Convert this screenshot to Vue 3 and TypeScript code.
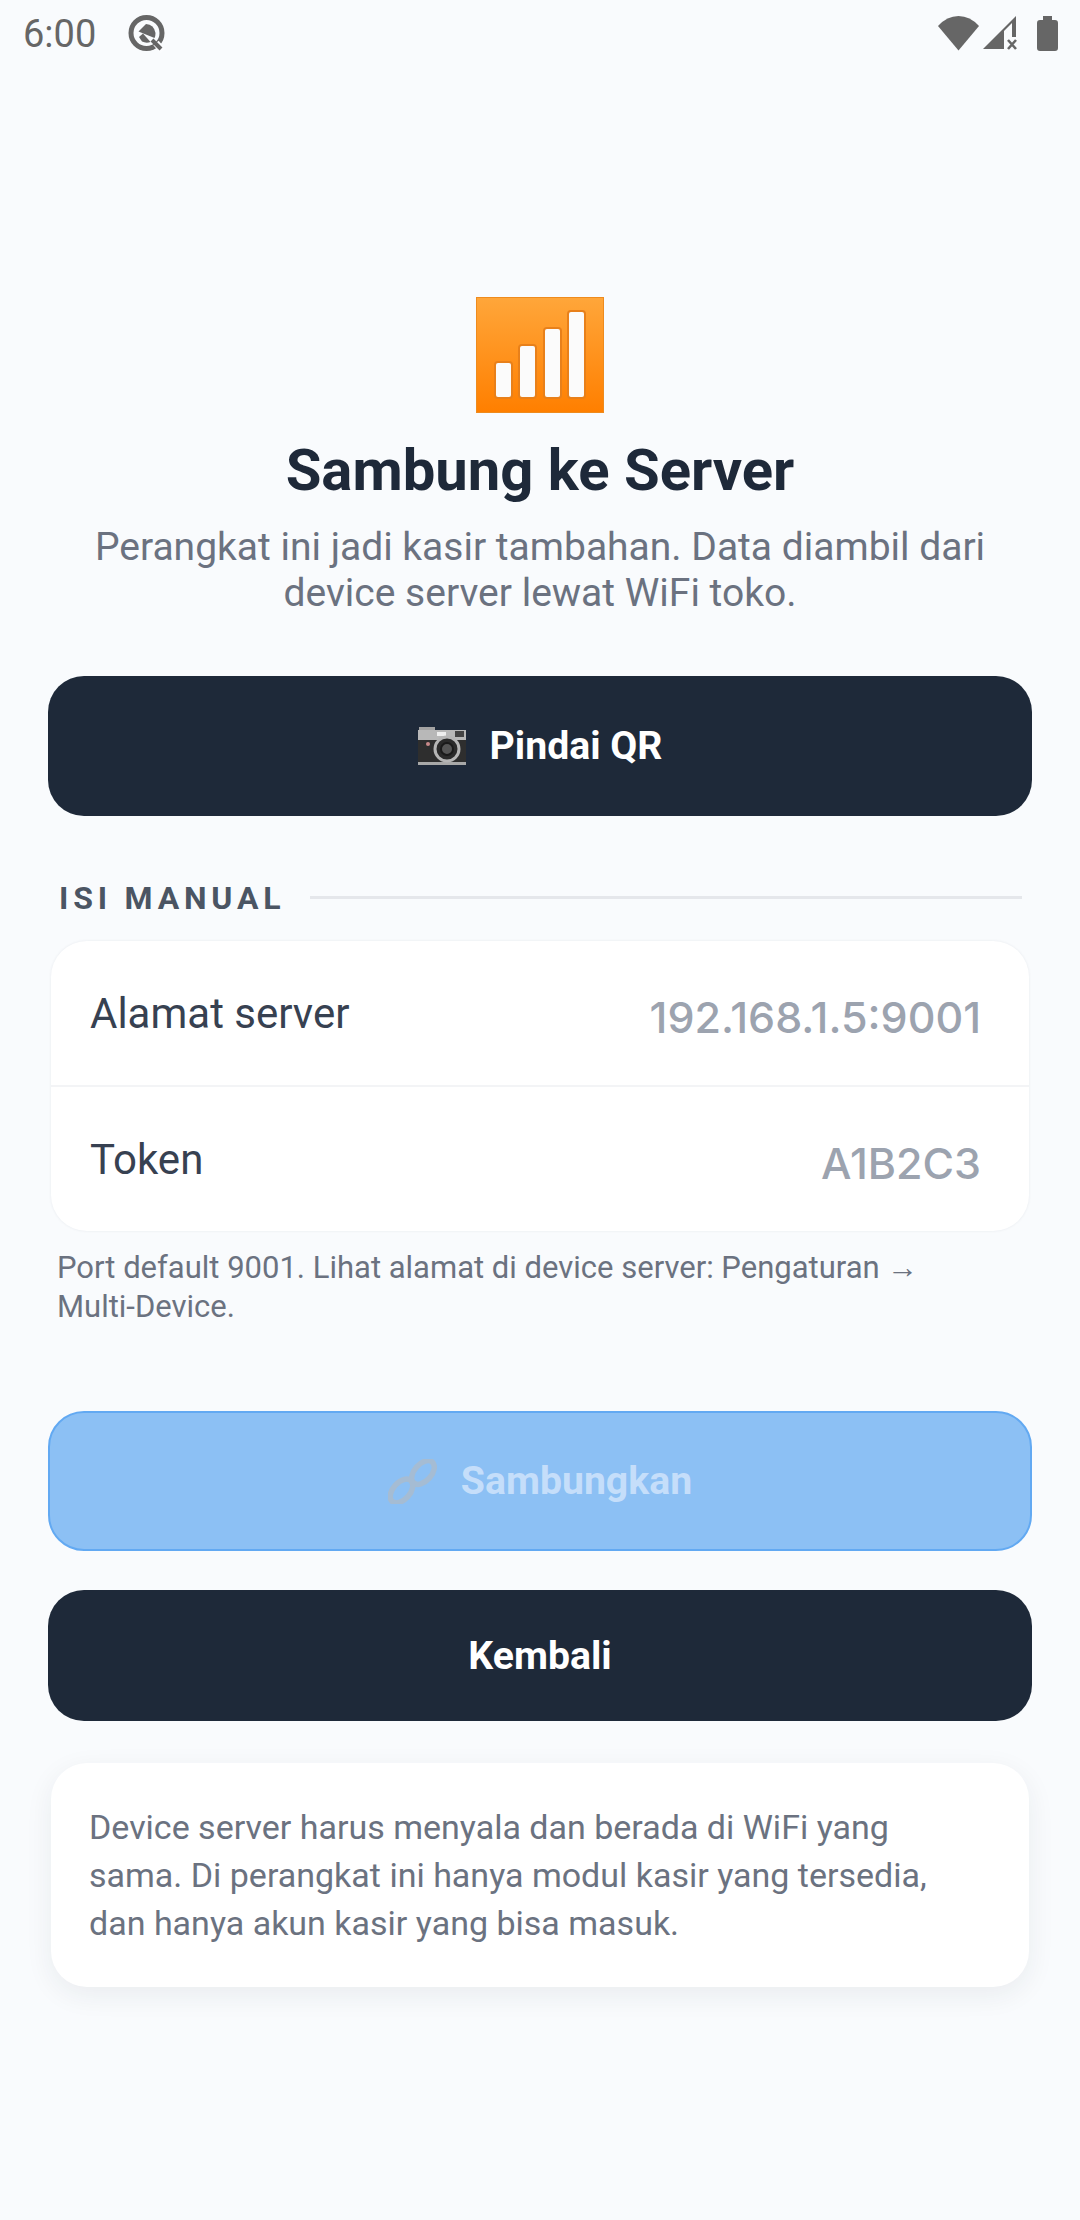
<script setup lang="ts">
const barHeights = [34, 51, 68, 85]
const rows = [
  { label: 'Alamat server', value: '192.168.1.5:9001' },
  { label: 'Token', value: 'A1B2C3' },
]
</script>

<template>
  <div class="screen">
    <header class="status-bar">
      <div class="status-left">
        <span class="clock">6:00</span>
        <svg class="q-icon" width="40" height="40" viewBox="0 0 40 40" fill="none">
          <circle cx="19.5" cy="20" r="15.5" stroke="#666" stroke-width="5" />
          <path d="M11.5 18.5 L19 11 Q27 11.500 28.5 20 Q28.5 23 27.5 25 Z" fill="#666" />
          <path d="M12 24 L16 20.500 L23.500 29 Q19 30.500 15 28.5 Z" fill="#666" />
          <path d="M29 30 L36 38" stroke="#fbfcfe" stroke-width="7" />
          <path d="M25 27 L34 36" stroke="#666" stroke-width="4" />
        </svg>
      </div>
      <div class="status-right">
        <svg width="41" height="35" viewBox="0 0 41 35"><path d="M0 10 Q9 0 20.500 0 Q32 0 41 10 L20.500 34.500 Z" fill="#666" /></svg>
        <svg width="34" height="34" viewBox="0 0 34 34">
          <path d="M0 33 L33 0 V21 H29 V7 L21 15 V33 Z" fill="#666" />
          <path d="M25 24 L33 33 M33 24 L25 33" stroke="#666" stroke-width="2.600" />
        </svg>
        <svg class="battery" width="21" height="35" viewBox="0 0 21 35"><path d="M6 0 H15 V4 H18 Q21 4 21 7 V32 Q21 35 18 35 H3 Q0 35 0 32 V7 Q0 4 3 4 H6 Z" fill="#666" /></svg>
      </div>
    </header>

    <main class="content">
      <div class="logo">
        <div v-for="h in barHeights" :key="h" class="logo-bar" :style="{ height: h + 'px' }" />
      </div>
      <h1 class="title">Sambung ke Server</h1>
      <p class="subtitle">Perangkat ini jadi kasir tambahan. Data diambil dari device server lewat WiFi toko.</p>

      <button class="btn btn-dark btn-qr">
        <svg width="48" height="38" viewBox="0 0 48 38">
          <rect x="1" y="0" width="16" height="6" fill="#a3a3a3" />
          <rect x="0" y="3" width="48" height="11" fill="#b8b8b8" />
          <rect x="0" y="13" width="48" height="22" fill="#2e2e2e" />
          <rect x="0" y="35" width="48" height="3" fill="#a8a8a8" />
          <rect x="19" y="5" width="9" height="4" fill="#eee" />
          <rect x="37" y="4" width="9" height="6" fill="#444" />
          <circle cx="10" cy="17" r="2" fill="#c98a8a" />
          <circle cx="29" cy="22" r="12" fill="#2a2a2a" stroke="#b5b5b5" stroke-width="3" />
          <circle cx="29" cy="22" r="6" fill="#555" stroke="#1a1a1a" stroke-width="2" />
        </svg>
        <span>Pindai QR</span>
      </button>

      <div class="section-head">
        <span class="section-label">ISI MANUAL</span>
        <span class="section-line" />
      </div>

      <section class="card form-card">
        <div v-for="row in rows" :key="row.label" class="form-row">
          <span class="form-label">{{ row.label }}</span>
          <span class="form-value">{{ row.value }}</span>
        </div>
      </section>

      <p class="hint">Port default 9001. Lihat alamat di device server: Pengaturan → Multi-Device.</p>

      <button class="btn btn-connect">
        <svg width="49" height="45" viewBox="0 0 49 45" fill="none" stroke="#a5bcd3" stroke-width="5.500">
          <ellipse cx="35" cy="13.500" rx="8.500" ry="14" transform="rotate(42 35 13.500)" />
          <ellipse cx="13.500" cy="32" rx="8.500" ry="14" transform="rotate(42 13.500 32)" />
        </svg>
        <span>Sambungkan</span>
      </button>

      <button class="btn btn-dark btn-back">Kembali</button>

      <section class="card info-card">
        Device server harus menyala dan berada di WiFi yang sama. Di perangkat ini hanya modul kasir yang tersedia, dan hanya akun kasir yang bisa masuk.
      </section>
    </main>
  </div>
</template>

<style>
html, body {
  margin: 0;
  background: #f9fbfd;
}
</style>

<style scoped>
.screen {
  width: 1080px;
  height: 2220px;
  background: #f9fbfd;
  font-family: Roboto, "Liberation Sans", sans-serif;
  overflow: hidden;
}

.status-bar {
  height: 66px;
  padding: 0 22px 0 23px;
  display: flex;
  align-items: center;
  justify-content: space-between;
  box-sizing: border-box;
}

.status-left {
  display: flex;
  align-items: center;
  gap: 31px;
}

.clock {
  padding-top: 2px;
  font-size: 38px;
  color: #666;
}

.status-right {
  display: flex;
  align-items: center;
  gap: 4px;
}

.battery {
  margin-left: 16px;
}

.content {
  display: flex;
  flex-direction: column;
  align-items: center;
  padding: 231px 48px 0;
}

.logo {
  width: 128px;
  height: 116px;
  box-sizing: border-box;
  padding: 0 19px 15px;
  display: flex;
  align-items: flex-end;
  justify-content: space-between;
  background: linear-gradient(#ffa63a, #ff7f00);
  border: 1px solid #ee8b1e;
}

.logo-bar {
  width: 15px;
  background: #fbfbfb;
  border-radius: 2px;
  box-shadow: 0 0 0 2px #e8801a;
}

.title {
  margin: 22px 0 0;
  font-size: 58px;
  line-height: 70px;
  font-weight: 700;
  color: #1e2939;
}

.subtitle {
  margin: 19px 0 0;
  width: 930px;
  font-size: 39px;
  line-height: 46px;
  text-align: center;
  color: #6b7280;
}

.btn {
  width: 984px;
  box-sizing: border-box;
  border: none;
  border-radius: 36px;
  display: flex;
  align-items: center;
  justify-content: center;
  font-family: inherit;
  font-size: 39.200px;
  font-weight: 700;
}

.btn-dark {
  background: #1e2939;
  color: #fff;
}

.btn-qr {
  margin-top: 60px;
  height: 140px;
  gap: 24px;
}

.section-head {
  margin-top: 63px;
  width: 984px;
  box-sizing: border-box;
  padding: 0 10px 0 11px;
  display: flex;
  align-items: center;
  gap: 25px;
}

.section-label {
  font-size: 32px;
  font-weight: 700;
  letter-spacing: 4.800px;
  color: #4b5563;
}

.section-line {
  flex: 1;
  height: 3px;
  margin-bottom: 2px;
  background: #e5e7eb;
}

.card {
  width: 978px;
  box-sizing: border-box;
  background: #fff;
  border-radius: 36px;
}

.form-card {
  margin-top: 24px;
  box-shadow: 0 0 3px rgba(30, 41, 59, 0.08);
}

.form-row {
  height: 144px;
  padding: 0 48px 0 39px;
  display: flex;
  align-items: center;
  justify-content: space-between;
}

.form-row + .form-row {
  border-top: 2px solid #f3f4f6;
}

.form-label {
  font-size: 42px;
  color: #374151;
}

.form-value {
  padding-top: 8px;
  font-family: Inter, Roboto, sans-serif;
  font-size: 43px;
  font-weight: 500;
  color: #9ca3af;
}

.hint {
  margin: 17px 0 0;
  width: 984px;
  box-sizing: border-box;
  padding: 0 70px 0 9px;
  font-size: 31px;
  line-height: 39px;
  color: #6b7280;
}

.btn-connect {
  margin-top: 85px;
  height: 140px;
  gap: 24px;
  background: #8cc0f4;
  border: 2px solid #62a9f2;
  color: #c5defa;
}

.btn-back {
  margin-top: 39px;
  height: 131px;
}

.info-card {
  margin-top: 42px;
  padding: 40px 70px 40px 38px;
  font-size: 34px;
  line-height: 48px;
  color: #6b7280;
  box-shadow: 0 8px 28px rgba(30, 41, 59, 0.07);
}
</style>
